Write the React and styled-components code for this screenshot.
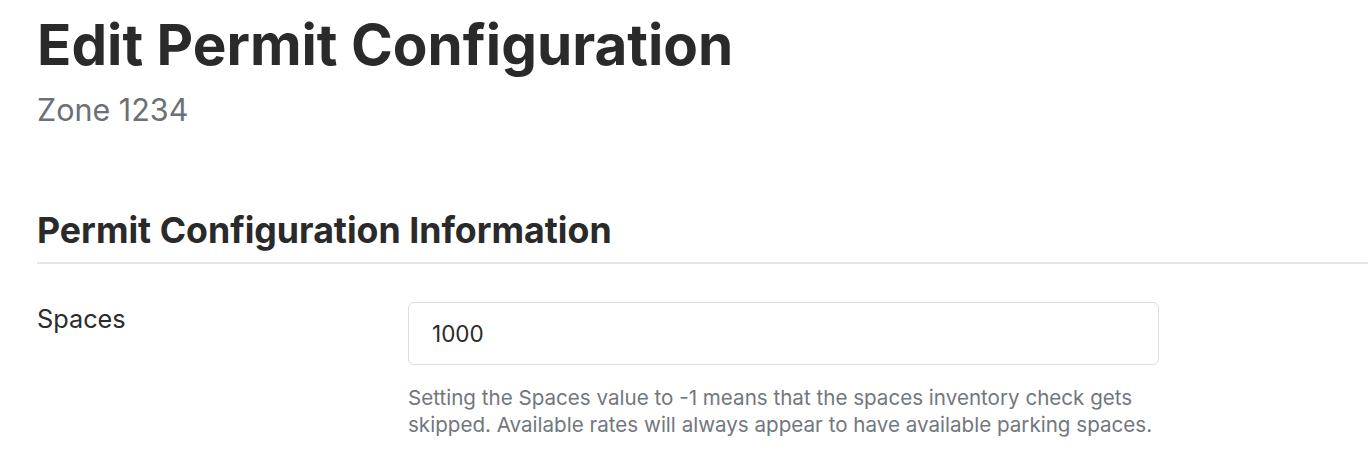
import styled, { createGlobalStyle } from "styled-components";

const GlobalStyle = createGlobalStyle`
  body {
    margin: 0;
    background: #ffffff;
    font-family: Inter, "Open Sans", sans-serif;
    color: #2b2b2b;
  }
`;

const Page = styled.main`
  padding: 12px 0 0 37px;
`;

const Title = styled.h1`
  margin: 0;
  font-size: 56.6px;
  font-weight: 700;
  line-height: 66px;
  color: #2a2a2a;
`;

const Subtitle = styled.p`
  margin: 15px 0 0;
  font-size: 30.5px;
  line-height: 34px;
  color: #6c7178;
`;

const Section = styled.section`
  margin-top: 83px;
`;

const SectionTitle = styled.h2`
  margin: 0;
  font-size: 35.7px;
  font-weight: 700;
  line-height: 40px;
  padding-bottom: 12px;
  border-bottom: 2px solid #e3e6ea;
  color: #2a2a2a;
`;

const Row = styled.div`
  display: grid;
  grid-template-columns: 371px 751px;
  margin-top: 38px;
`;

const Label = styled.label`
  font-size: 25.3px;
  line-height: 34px;
  color: #2b2b2b;
`;

const Field = styled.div`
  display: flex;
  flex-direction: column;
`;

const Input = styled.input`
  box-sizing: border-box;
  height: 63px;
  width: 100%;
  padding: 0 23px;
  border: 1.5px solid #dadee3;
  border-radius: 6px;
  font-family: inherit;
  font-size: 22.5px;
  color: #2b2b2b;
  outline: none;
`;

const Help = styled.p`
  margin: 19px 0 0;
  font-size: 20.6px;
  line-height: 27px;
  color: #72777e;
`;

export default function App() {
  return (
    <>
      <GlobalStyle />
      <Page>
        <Title>Edit Permit Configuration</Title>
        <Subtitle>Zone 1234</Subtitle>
        <Section>
          <SectionTitle>Permit Configuration Information</SectionTitle>
          <Row>
            <Label htmlFor="spaces">Spaces</Label>
            <Field>
              <Input id="spaces" defaultValue="1000" />
              <Help>
                Setting the Spaces value to -1 means that the spaces inventory check gets
                skipped. Available rates will always appear to have available parking spaces.
              </Help>
            </Field>
          </Row>
        </Section>
      </Page>
    </>
  );
}
